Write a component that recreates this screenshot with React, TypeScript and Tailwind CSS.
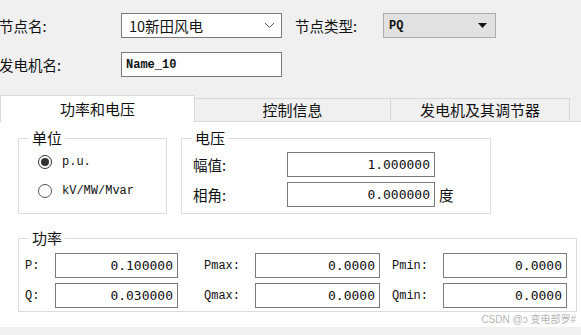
import type { ReactNode } from 'react';

const cjk = "font-['Noto_Sans_CJK_SC','Noto_Sans',sans-serif]";
const mono = "font-['Liberation_Mono','DejaVu_Sans_Mono',monospace]";
const num = "font-['DejaVu_Sans_Mono','Liberation_Mono',monospace]";

function Field({ value, className = '' }: { value: string; className?: string }) {
  return (
    <div
      className={`h-[25px] bg-white border border-[#7a7a7a] flex items-center justify-end pr-[4px] text-[13px] text-[#111] ${num} ${className}`}
    >
      {value}
    </div>
  );
}

function Group({ title, className = '', children }: { title: string; className?: string; children: ReactNode }) {
  return (
    <fieldset className={`border border-[#dcdcdc] ${className}`}>
      <legend className={`ml-[10px] px-[3px] text-[15px] leading-[20px] text-[#111] ${cjk}`}>{title}</legend>
      {children}
    </fieldset>
  );
}

function Radio({ checked, label }: { checked?: boolean; label: string }) {
  return (
    <div className="flex items-center h-[20px]">
      <span
        className={`w-[14px] h-[14px] rounded-full border flex items-center justify-center ${
          checked ? 'border-[#333]' : 'border-[#555]'
        }`}
      >
        {checked && <span className="w-[8px] h-[8px] rounded-full bg-[#333]" />}
      </span>
      <span className={`ml-[10px] text-[12px] text-[#111] ${mono}`}>{label}</span>
    </div>
  );
}

export default function App() {
  return (
    <div className={`w-[581px] h-[335px] bg-[#f0f0f0] overflow-hidden relative text-[#111] ${cjk}`}>
      {/* top rows */}
      <div className="mt-[13px] flex items-center h-[25px]">
        <span className="w-[122px] text-[14.5px] -ml-[1px]">节点名:</span>
        <div className="w-[161px] h-[25px] bg-white border border-[#7a7a7a] flex items-center justify-between pl-[7px] pr-[6px]">
          <span className="text-[14.5px]">10新田风电</span>
          <svg width="11" height="7" viewBox="0 0 11 7">
            <path d="M1 1 L5.5 5.5 L10 1" fill="none" stroke="#555" strokeWidth="1" />
          </svg>
        </div>
        <span className="ml-[13px] w-[88px] text-[14.5px]">节点类型:</span>
        <div className="w-[113px] h-[25px] bg-[#e1e1e1] border border-[#adadad] flex items-center justify-between pl-[5px] pr-[8px]">
          <span className={`text-[12px] font-bold ${mono}`}>PQ</span>
          <svg width="9" height="5" viewBox="0 0 9 5">
            <path d="M0 0 H9 L4.5 5 Z" fill="#111" />
          </svg>
        </div>
      </div>
      <div className="mt-[14px] flex items-center h-[25px]">
        <span className="w-[122px] text-[14.5px] -ml-[1px]">发电机名:</span>
        <div className="w-[161px] h-[25px] bg-white border border-[#7a7a7a] flex items-center pl-[4px]">
          <span className={`text-[12px] font-bold ${mono}`}>Name_10</span>
        </div>
      </div>

      {/* tabs */}
      <div className="mt-[18px] flex items-end h-[26px] relative z-10">
        <div className="w-[195px] h-[27px] -mb-px bg-white border border-b-0 border-[#d9d9d9] flex items-center justify-center text-[15px]">
          功率和电压
        </div>
        <div className="w-[196px] h-[23px] bg-[#f0f0f0] border border-l-0 border-b-0 border-[#d9d9d9] flex items-center justify-center text-[15px]">
          控制信息
        </div>
        <div className="w-[179px] h-[23px] bg-[#f0f0f0] border border-l-0 border-b-0 border-[#d9d9d9] flex items-center justify-center text-[15px]">
          发电机及其调节器
        </div>
      </div>

      {/* panel */}
      <div className="h-[206px] bg-white border-t border-[#d9d9d9] pt-[6px] pl-[18px]">
        <div className="flex gap-[14px]">
          <Group title="单位" className="w-[149px] h-[86px]">
            <div className="pl-[19px] pt-[4px] flex flex-col gap-[9px]">
              <Radio checked label="p.u." />
              <Radio label="kV/MW/Mvar" />
            </div>
          </Group>
          <Group title="电压" className="w-[310px] h-[86px]">
            <div className="pl-[11px] pt-[4px] flex flex-col gap-[5px]">
              <div className="flex items-center">
                <span className="w-[94px] text-[14.5px]">幅值:</span>
                <Field value="1.000000" className="w-[148px]" />
              </div>
              <div className="flex items-center">
                <span className="w-[94px] text-[14.5px]">相角:</span>
                <Field value="0.000000" className="w-[148px]" />
                <span className="ml-[4px] text-[14.5px]">度</span>
              </div>
            </div>
          </Group>
        </div>

        <Group title="功率" className="mt-[14px] w-[559px] h-[84px]">
          <div className={`pl-[6px] pt-[5px] flex flex-col gap-[5px] text-[12px] ${mono}`}>
            {[
              ['P:', '0.100000', 'Pmax:', '0.0000', 'Pmin:', '0.0000'],
              ['Q:', '0.030000', 'Qmax:', '0.0000', 'Qmin:', '0.0000'],
            ].map((r) => (
              <div key={r[0]} className="flex items-center">
                <span className="w-[30px]">{r[0]}</span>
                <Field value={r[1]} className="w-[123px]" />
                <span className="ml-[26px] w-[51px]">{r[2]}</span>
                <Field value={r[3]} className="w-[125px]" />
                <span className="ml-[12px] w-[51px]">{r[4]}</span>
                <Field value={r[5]} className="w-[124px]" />
              </div>
            ))}
          </div>
        </Group>
      </div>

      <span className="absolute right-[5px] bottom-[9px] text-[10px] leading-[12px] text-[#b4b4b4] font-['Liberation_Sans','Noto_Sans_CJK_SC',sans-serif]">
        CSDN @ↄ 变电部罗#
      </span>
    </div>
  );
}
